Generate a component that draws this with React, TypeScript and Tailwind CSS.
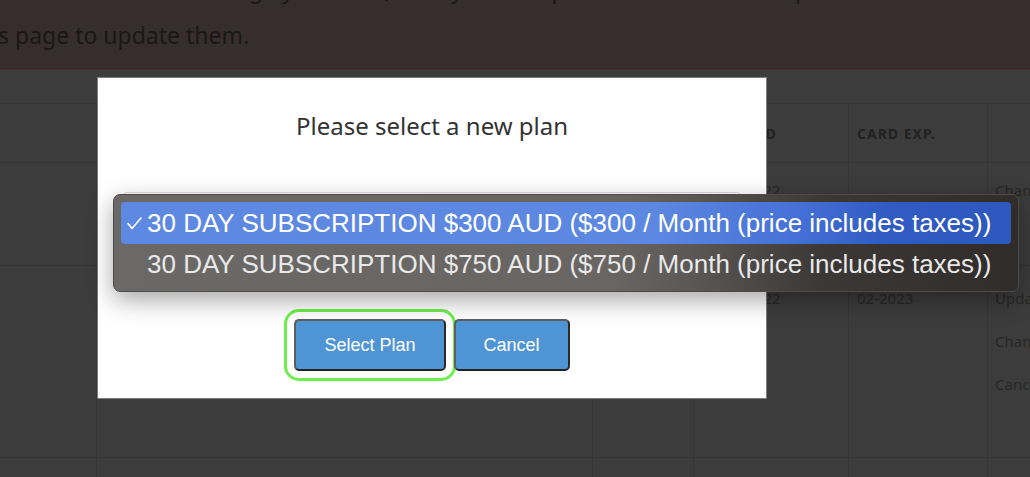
import React from 'react'

const plans = [
  '30 DAY SUBSCRIPTION $300 AUD ($300 / Month (price includes taxes))',
  '30 DAY SUBSCRIPTION $750 AUD ($750 / Month (price includes taxes))',
]

function Check() {
  return (
    <svg width="15" height="13" viewBox="0 0 15 13" className="shrink-0">
      <polyline points="1,6.5 5,11.5 14,1" fill="none" stroke="white" strokeWidth="1.6" strokeLinecap="round" strokeLinejoin="round" />
    </svg>
  )
}

export default function App() {
  const bodyFont = { fontFamily: '"Noto Sans", "Open Sans", sans-serif' }
  const sysFont = { fontFamily: '"Liberation Sans", Arial, sans-serif' }

  return (
    <div className="relative w-[1030px] h-[477px] overflow-hidden bg-[#3c3c3c]" style={bodyFont}>
      {/* alert (dimmed by backdrop) */}
      <div className="h-[70px] overflow-hidden border-b border-[#4a2a2a] bg-[#372d2c] text-[#1b1717] text-[23px]">
        <div className="-mt-[34px] leading-[46px] whitespace-nowrap">
          <div className="-ml-[6px]">We were unable to charge your card, it may have expired. Please use the options on thi</div>
          <div className="-ml-[2px]">s page to update them.</div>
        </div>
      </div>

      {/* table behind */}
      <div className="h-[34px] border-b border-[#363636]" />
      <div className="grid grid-cols-[97px_496px_101px_155px_139px_1fr] text-[#272727]">
        {/* header row */}
        <div className="h-[59px] border-r border-b border-[#363636]" />
        <div className="h-[59px] border-r border-b border-[#363636]" />
        <div className="h-[59px] border-r border-b border-[#363636]" />
        <div className="h-[59px] border-r border-b border-[#363636] flex items-center px-[8px] text-[14px] font-bold tracking-[1px] text-[#222]">RENEWED</div>
        <div className="h-[59px] border-r border-b border-[#363636] flex items-center px-[8px] text-[14px] font-bold tracking-[1px] text-[#222]">CARD EXP.</div>
        <div className="h-[59px] border-b border-[#363636]" />

        {/* row 1 */}
        <div className="h-[103px] border-r border-b border-[#363636]" />
        <div className="h-[103px] border-r border-b border-[#363636]" />
        <div className="h-[103px] border-r border-b border-[#363636]" />
        <div className="h-[103px] border-r border-b border-[#363636] px-[8px] pt-[16px] text-[15px]">15-02-2022</div>
        <div className="h-[103px] border-r border-b border-[#363636]" />
        <div className="h-[103px] border-b border-[#363636] pl-[7px] pt-[16px] text-[15px] whitespace-nowrap">Change Plan</div>

        {/* row 2 */}
        <div className="h-[192px] border-r border-b border-[#363636]" />
        <div className="h-[192px] border-r border-b border-[#363636]" />
        <div className="h-[192px] border-r border-b border-[#363636]" />
        <div className="h-[192px] border-r border-b border-[#363636] px-[8px] pt-[21px] text-[15px]">15-03-2022</div>
        <div className="h-[192px] border-r border-b border-[#363636] px-[8px] pt-[21px] text-[15px]">02-2023</div>
        <div className="h-[192px] border-b border-[#363636] pl-[7px] pt-[21px] text-[15px] whitespace-nowrap flex flex-col gap-[21px]">
          <span className="leading-[22px]">Update Card</span>
          <span className="leading-[22px]">Change Plan</span>
          <span className="leading-[22px]">Cancel Plan</span>
        </div>

        {/* row 3 */}
        <div className="h-[40px] border-r border-[#363636]" />
        <div className="h-[40px] border-r border-[#363636]" />
        <div className="h-[40px] border-r border-[#363636]" />
        <div className="h-[40px] border-r border-[#363636]" />
        <div className="h-[40px] border-r border-[#363636]" />
        <div className="h-[40px]" />
      </div>

      {/* modal */}
      <div className="absolute left-[97px] top-[77px] w-[670px] h-[322px] bg-white border border-[#7e7e7e] flex flex-col items-center">
        <div className="mt-[32px] text-[24px] leading-[32px] text-[#333]">Please select a new plan</div>
        <div className="mt-[50px] w-[620px] h-[40px] rounded-[5px] border border-[#dcdcdc] bg-white" />
        <div className="mt-[87px] flex gap-[8px]" style={sysFont}>
          <button className="h-[52px] px-[28px] rounded-[5px] bg-[#4f95d6] text-white text-[18px] border-2 border-[#5e5e5e] border-b-[#222] border-r-[#2a2a2a] outline-[3px] outline-solid outline-[#6cf04c] outline-offset-[7px]">
            Select Plan
          </button>
          <button className="h-[52px] px-[28px] rounded-[5px] bg-[#4f95d6] text-white text-[18px] border-2 border-[#5e5e5e] border-b-[#222] border-r-[#2a2a2a]">
            Cancel
          </button>
        </div>
      </div>

      {/* native select popup */}
      <div
        className="absolute left-[113px] top-[194px] w-[906px] h-[98px] rounded-[7px] border border-[#4b4b4b] px-[7px] pt-[7px] bg-[linear-gradient(to_right,#6b6967_0%,#686562_55%,#5a5755_64%,#3b3836_78%,#2f2c2a_100%)] shadow-[0_8px_24px_rgba(0,0,0,0.35)]"
        style={sysFont}
      >
        <div className="h-[42px] rounded-[4px] flex items-center pl-[6px] gap-[5px] text-white text-[26px] bg-[linear-gradient(to_right,#5e89e2_0%,#5c88e1_60%,#4570d6_76%,#2f5bc2_86%,#2d59bf_100%)]">
          <Check />
          <span className="whitespace-nowrap">{plans[0]}</span>
        </div>
        <div className="h-[41px] flex items-center pl-[26px] text-[#e9e9e9] text-[26px]">
          <span className="whitespace-nowrap">{plans[1]}</span>
        </div>
      </div>
    </div>
  )
}
